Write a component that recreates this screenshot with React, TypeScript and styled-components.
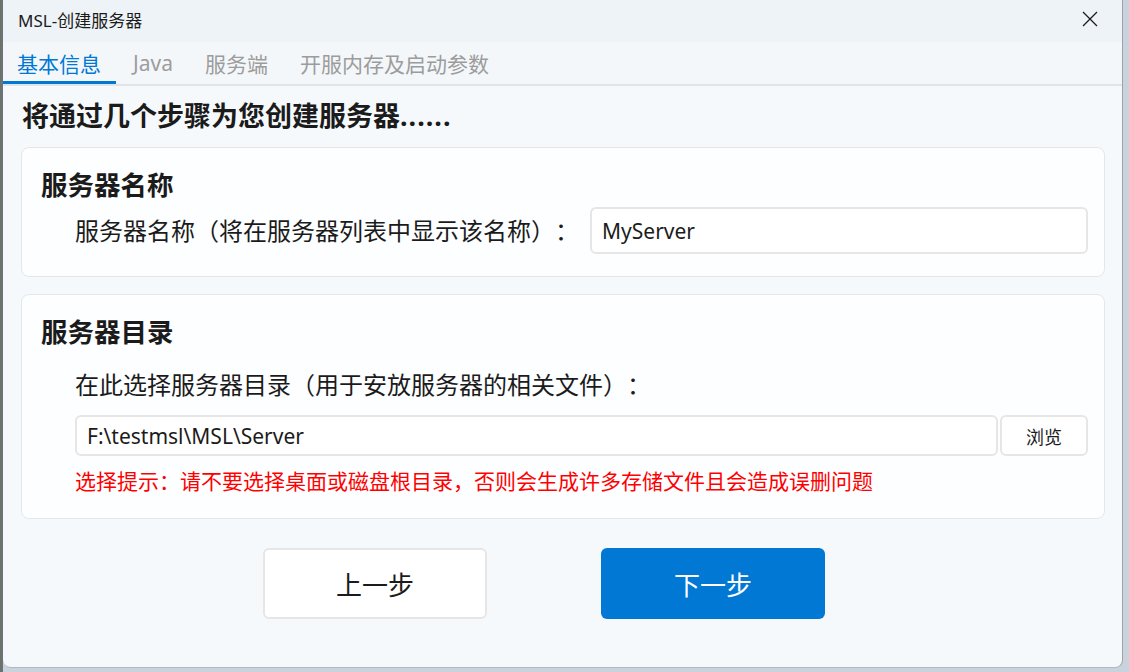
import styled, { createGlobalStyle } from 'styled-components';

const GlobalStyle = createGlobalStyle`
  html, body {
    margin: 0;
    padding: 0;
  }
  body {
    background: #aab1b8;
    font-family: 'Noto Sans', 'Noto Sans CJK SC', sans-serif;
    text-spacing-trim: space-all;
  }
  input, button {
    text-spacing-trim: space-all;
  }
`;

const tabs = ['基本信息', 'Java', '服务端', '开服内存及启动参数'];

export default function App() {
  return (
    <>
      <GlobalStyle />
      <Desktop>
        <Window>
          <TitleBar>
            <Title>MSL-创建服务器</Title>
            <CloseButton>
              <svg width="16" height="16" viewBox="0 0 16 16">
                <path d="M1 1 L15 15 M15 1 L1 15" stroke="#1b1b1b" strokeWidth="1.3" fill="none" />
              </svg>
            </CloseButton>
          </TitleBar>

          <TabBar>
            {tabs.map((t, i) => (
              <Tab key={t} active={i === 0}>{t}</Tab>
            ))}
          </TabBar>

          <Content>
            <Heading>将通过几个步骤为您创建服务器<Dots>......</Dots></Heading>

            <Card>
              <CardTitle>服务器名称</CardTitle>
              <NameRow>
                <Label>服务器名称（将在服务器列表中显示该名称）：</Label>
                <Input tall defaultValue="MyServer" />
              </NameRow>
            </Card>

            <Card>
              <CardTitle>服务器目录</CardTitle>
              <Indent>
                <Label>在此选择服务器目录（用于安放服务器的相关文件）：</Label>
                <PathRow>
                  <Input defaultValue="F:\testmsl\MSL\Server" />
                  <BrowseButton>浏览</BrowseButton>
                </PathRow>
                <Hint>选择提示：请不要选择桌面或磁盘根目录，否则会生成许多存储文件且会造成误删问题</Hint>
              </Indent>
            </Card>

            <ButtonRow>
              <StepButton>上一步</StepButton>
              <StepButton primary>下一步</StepButton>
            </ButtonRow>
          </Content>
        </Window>
      </Desktop>
    </>
  );
}

const Desktop = styled.div`
  width: 1129px;
  height: 672px;
  overflow: hidden;
  background: linear-gradient(to right, #5f7a5c 0, #7b6a8a 3px, #c9d3de 3px);
`;

const Window = styled.div`
  margin-left: 3px;
  width: 1120px;
  height: 668px;
  box-sizing: border-box;
  background: #f6f9fc;
  border-right: 1px solid #9fa3a7;
  border-bottom: 1px solid #b5b9bd;
  border-radius: 0 0 8px 8px;
  display: flex;
  flex-direction: column;
  overflow: hidden;
`;

const TitleBar = styled.div`
  height: 42px;
  flex-shrink: 0;
  background: #eef3f7;
  display: flex;
  align-items: center;
  justify-content: space-between;
  padding: 0 24px 0 15px;
`;

const Title = styled.span`
  font-size: 17px;
  color: #1b1b1b;
  padding-bottom: 4px;
`;

const CloseButton = styled.div`
  width: 16px;
  height: 16px;
  display: flex;
  margin-bottom: 4px;
`;

const TabBar = styled.div`
  height: 42px;
  flex-shrink: 0;
  display: flex;
  gap: 3px;
  background: #f3f7fa;
  border-bottom: 2px solid #e2e5e8;
`;

const Tab = styled.div<{ active?: boolean }>`
  padding: 0 15px 0 14px;
  display: flex;
  align-items: center;
  font-size: 21px;
  color: ${p => (p.active ? '#0078d4' : '#9c9c9c')};
  box-shadow: ${p => (p.active ? 'inset 0 -3px 0 #0078d4' : 'none')};
`;

const Content = styled.div`
  padding: 0 17px 0 18px;
  display: flex;
  flex-direction: column;
`;

const Heading = styled.h1`
  margin: 13px 0 14px 1px;
  font-size: 27px;
  line-height: 34px;
  font-weight: 700;
  color: #1b1b1b;
`;

const Dots = styled.span`
  letter-spacing: 1px;
`;

const Card = styled.div`
  background: #fdfeff;
  border: 1px solid #e4e6e8;
  border-radius: 8px;
  padding: 20px 16px 22px 19px;
  margin-bottom: 17px;
`;

const CardTitle = styled.div`
  font-size: 26.5px;
  line-height: 34px;
  font-weight: 700;
  color: #1b1b1b;
`;

const NameRow = styled.div`
  margin-top: 5px;
  padding-left: 34px;
  display: flex;
  align-items: center;
  justify-content: space-between;
`;

const Indent = styled.div`
  padding-left: 34px;
  margin-top: 21px;
`;

const Label = styled.span`
  font-size: 24px;
  line-height: 30px;
  color: #1b1b1b;
`;

const Input = styled.input<{ tall?: boolean }>`
  box-sizing: border-box;
  height: ${p => (p.tall ? 47 : 41)}px;
  width: ${p => (p.tall ? '498px' : 'auto')};
  flex: ${p => (p.tall ? 'none' : 1)};
  border: 2px solid #e6e6e6;
  border-radius: 6px;
  background: #fff;
  padding: 0 10px;
  font-family: 'Noto Sans', 'Noto Sans CJK SC', sans-serif;
  font-size: 21px;
  color: #1b1b1b;
  outline: none;
`;

const PathRow = styled.div`
  margin-top: 15px;
  display: flex;
  gap: 2px;
`;

const BrowseButton = styled.button`
  width: 88px;
  height: 41px;
  border: 2px solid #e6e6e6;
  border-radius: 6px;
  background: #fff;
  font-family: 'Noto Sans', 'Noto Sans CJK SC', sans-serif;
  font-size: 18px;
  color: #1b1b1b;
  padding: 0;
`;

const Hint = styled.div`
  margin-top: 10px;
  font-size: 21px;
  line-height: 30px;
  color: #ff0000;
`;

const ButtonRow = styled.div`
  margin-top: 12px;
  padding-left: 242px;
  display: flex;
  gap: 114px;
`;

const StepButton = styled.button<{ primary?: boolean }>`
  width: 224px;
  height: 71px;
  border-radius: 6px;
  border: ${p => (p.primary ? 'none' : '2px solid #e6e6e6')};
  background: ${p => (p.primary ? '#0078d4' : '#fff')};
  color: ${p => (p.primary ? '#fff' : '#1b1b1b')};
  font-family: 'Noto Sans', 'Noto Sans CJK SC', sans-serif;
  font-size: 26px;
  padding: 0;
`;
